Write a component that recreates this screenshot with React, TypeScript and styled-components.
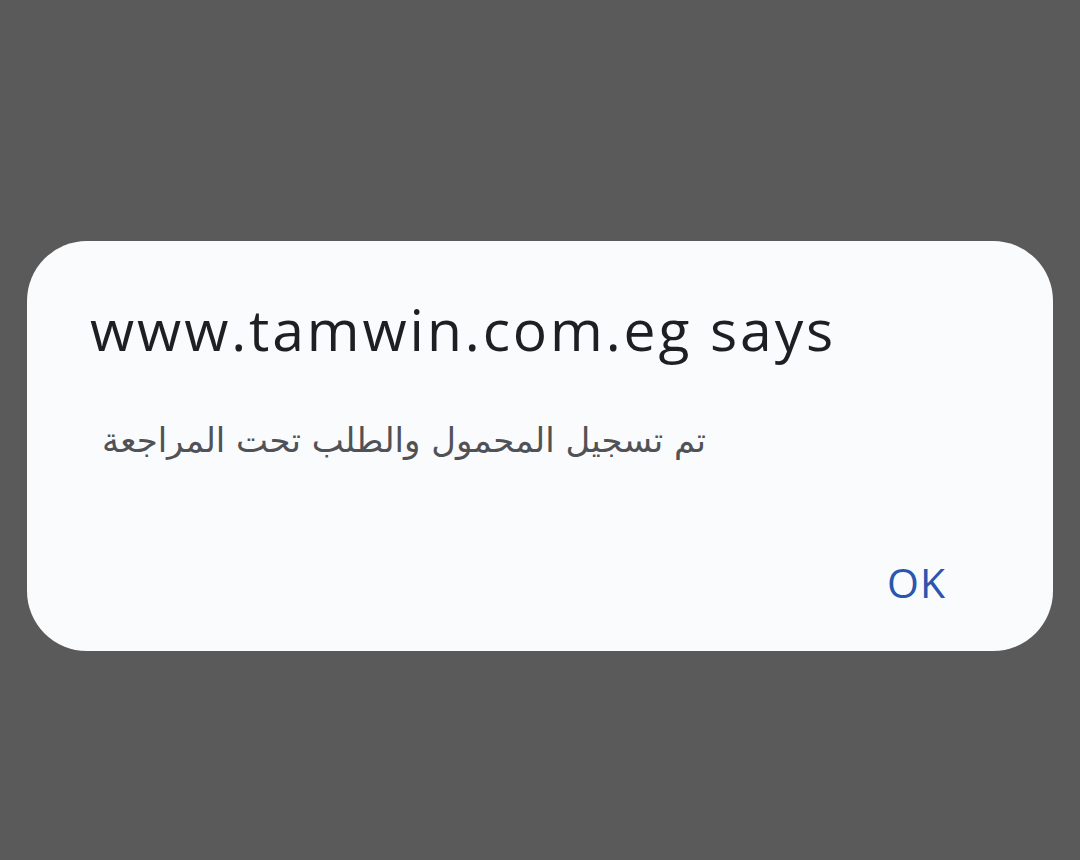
import React from 'react';
import styled, { createGlobalStyle } from 'styled-components';

const GlobalStyle = createGlobalStyle`
  html, body {
    margin: 0;
    padding: 0;
    background: #5a5a5a;
  }
`;

const Page = styled.div`
  box-sizing: border-box;
  width: 1080px;
  height: 860px;
  padding: 241px 27px 0;
`;

const Dialog = styled.div`
  box-sizing: border-box;
  width: 1026px;
  height: 410px;
  border-radius: 60px;
  background: #fafbfd;
  padding: 50px 63px 0;
  display: flex;
  flex-direction: column;
`;

const Title = styled.h1`
  margin: 0;
  font-family: 'Open Sans', sans-serif;
  font-weight: 400;
  font-size: 57px;
  line-height: 76px;
  color: #1d1f22;
  letter-spacing: 2.9px;
`;

const Message = styled.p`
  margin: 48px 0 0;
  padding-left: 12px;
  font-family: 'DejaVu Sans', sans-serif;
  font-size: 34px;
  line-height: 50px;
  color: #505256;
`;

const Actions = styled.div`
  margin-top: auto;
  display: flex;
  justify-content: flex-end;
  padding: 0 44px 44px 0;
`;

const Button = styled.button`
  border: none;
  background: none;
  padding: 0;
  font-family: 'Open Sans', sans-serif;
  font-weight: 500;
  font-size: 41px;
  line-height: 50px;
  letter-spacing: 1px;
  color: #2a56ad;
  cursor: pointer;
`;

export default function App () {
  return (
    <Page>
      <GlobalStyle />
      <Dialog>
        <Title>www.tamwin.com.eg says</Title>
        <Message>تم تسجيل المحمول والطلب تحت المراجعة</Message>
        <Actions>
          <Button>OK</Button>
        </Actions>
      </Dialog>
    </Page>
  );
}
